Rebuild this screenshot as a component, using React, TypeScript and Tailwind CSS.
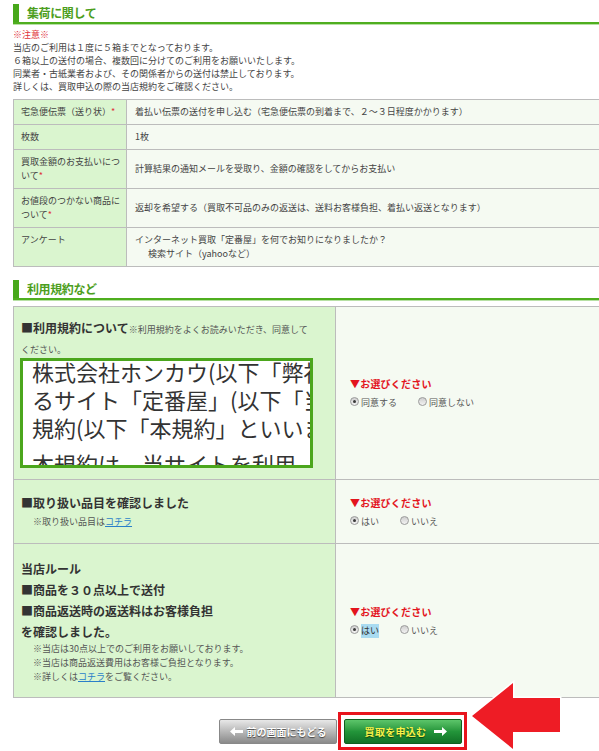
import React from "react";

function SectionHeader({ title }: { title: string }) {
  return (
    <div>
      <div className="flex h-[18px]">
        <div className="w-[6px] bg-[#47a81a]" />
        <div className="pl-[8px] text-[12px] leading-[18px] font-bold text-[#4c9e20] tracking-[-0.4px]">
          {title}
        </div>
      </div>
      <div className="h-[2px] bg-[#4fae1f]" />
      <div className="h-px bg-[#b7e0a4]" />
    </div>
  );
}

function Radio({ checked }: { checked?: boolean }) {
  return (
    <span className="relative inline-block w-[9px] h-[9px] rounded-full border border-[#9a9a9a] bg-gradient-to-b from-[#cfcfcf] to-[#f3f3f3] mt-[1px]">
      {checked && (
        <span className="absolute left-[2px] top-[2px] w-[3px] h-[3px] rounded-full bg-[#3a3a3a]" />
      )}
    </span>
  );
}

function Choice({
  a,
  b,
  highlight,
}: {
  a: string;
  b: string;
  highlight?: boolean;
}) {
  return (
    <div>
      <div className="text-[10px] leading-[16px] font-bold text-[#e3141d] tracking-[0.2px]">
        ▼お選びください
      </div>
      <div className="mt-[4px] flex items-start text-[9px] leading-[14px] text-[#555]">
        <Radio checked />
        <span className={"ml-[2px] " + (highlight ? "bg-[#a9dbf1] text-[#333]" : "")}>{a}</span>
        <span className="ml-[21px] flex items-start">
          <Radio />
          <span className="ml-[2px]">{b}</span>
        </span>
      </div>
    </div>
  );
}

const Req = () => <span className="text-[#e0323a]">*</span>;

export default function App() {
  const rows1: { label: React.ReactNode; value: React.ReactNode }[] = [
    {
      label: (
        <>
          宅急便伝票（送り状）<Req />
        </>
      ),
      value: "着払い伝票の送付を申し込む（宅急便伝票の到着まで、２～３日程度かかります）",
    },
    { label: "枚数", value: "1枚" },
    {
      label: (
        <>
          買取金額のお支払いにつ
          <br />
          いて<Req />
        </>
      ),
      value: "計算結果の通知メールを受取り、金額の確認をしてからお支払い",
    },
    {
      label: (
        <>
          お値段のつかない商品に
          <br />
          ついて<Req />
        </>
      ),
      value: "返却を希望する（買取不可品のみの返送は、送料お客様負担、着払い返送となります）",
    },
    {
      label: "アンケート",
      value: (
        <div>
          <div>インターネット買取「定番屋」を何でお知りになりましたか？</div>
          <div className="pl-[13px]">検索サイト（yahooなど）</div>
        </div>
      ),
    },
  ];

  return (
    <div className="relative w-[599px] h-[751px] overflow-hidden bg-white font-['Noto_Sans_CJK_JP','Noto_Sans',sans-serif] text-[#444]">
      <div className="ml-[13px] w-[655px] pt-[4px]">
        <SectionHeader title="集荷に関して" />

        <div className="mt-[3px] text-[9px] leading-[13px] text-[#444]">
          <div className="text-[#e0323a]">※注意※</div>
          <div>当店のご利用は１度に５箱までとなっております。</div>
          <div>６箱以上の送付の場合、複数回に分けてのご利用をお願いいたします。</div>
          <div>同業者・古紙業者および、その関係者からの送付は禁止しております。</div>
          <div>詳しくは、買取申込の際の当店規約をご確認ください。</div>
        </div>

        <div className="mt-[6px] border-t border-[#bcbcbc] text-[9px] leading-[14px] text-[#444]">
          {rows1.map((r, i) => (
            <div key={i} className="flex border-b border-[#bcbcbc]">
              <div className="w-[114px] shrink-0 bg-[#daf5cf] border-l border-r border-[#bcbcbc] pl-[7px] py-[5px]">
                {r.label}
              </div>
              <div className="flex-1 flex items-center bg-[#f5faf2] pl-[8px] py-[5px]">{r.value}</div>
            </div>
          ))}
        </div>

        <div className="mt-[13px]">
          <SectionHeader title="利用規約など" />
        </div>

        <div className="mt-[5px] border-t border-[#bcbcbc] text-[#333]">
          {/* Row 1 */}
          <div className="flex border-b border-[#bcbcbc] h-[173px]">
            <div className="w-[323px] shrink-0 bg-[#daf5cf] border-l border-r border-[#bcbcbc] pl-[7px] flex items-center">
              <div>
                <div className="leading-[16px]">
                  <span className="text-[12px] font-bold">■利用規約について</span>
                  <span className="text-[9px] text-[#555]">※利用規約をよくお読みいただき、同意して</span>
                  <br />
                  <span className="text-[9px] text-[#555]">ください。</span>
                </div>
                <div className="-ml-px w-[293px] h-[110px] border-[3px] border-[#4ba61c] bg-white overflow-hidden pl-[9px] text-[22px] leading-[28px] text-[#333] whitespace-nowrap">
                  <div className="-mt-[4px]">
                    <div>株式会社ホンカウ(以下「弊社</div>
                    <div>るサイト「定番屋」(以下「当</div>
                    <div>規約(以下「本規約」といいま</div>
                    <div className="pt-[8px]">本規約は、当サイトを利用</div>
                  </div>
                </div>
              </div>
            </div>
            <div className="flex-1 bg-[#f5faf2] pl-[14px] flex items-center">
              <Choice a="同意する" b="同意しない" />
            </div>
          </div>

          {/* Row 2 */}
          <div className="flex border-b border-[#bcbcbc] h-[64px]">
            <div className="w-[323px] shrink-0 bg-[#daf5cf] border-l border-r border-[#bcbcbc] pl-[7px] flex items-center">
              <div>
                <div className="text-[12px] leading-[16px] font-bold">■取り扱い品目を確認しました</div>
                <div className="mt-[4px] pl-[12px] text-[9px] leading-[14px] text-[#555]">
                  ※取り扱い品目は<span className="text-[#2a7fc9] underline">コチラ</span>
                </div>
              </div>
            </div>
            <div className="flex-1 bg-[#f5faf2] pl-[14px] flex items-center">
              <Choice a="はい" b="いいえ" />
            </div>
          </div>

          {/* Row 3 */}
          <div className="flex border-b border-[#bcbcbc] h-[154px]">
            <div className="w-[323px] shrink-0 bg-[#daf5cf] border-l border-r border-[#bcbcbc] pl-[7px] flex items-center">
              <div>
                <div className="text-[12px] leading-[21px] font-bold">
                  <div>当店ルール</div>
                  <div>■商品を３０点以上で送付</div>
                  <div>■商品返送時の返送料はお客様負担</div>
                  <div>を確認しました。</div>
                </div>
                <div className="pl-[12px] text-[9px] leading-[14px] text-[#555]">
                  <div>※当店は30点以上でのご利用をお願いしております。</div>
                  <div>※当店は商品返送費用はお客様ご負担となります。</div>
                  <div>
                    ※詳しくは<span className="text-[#2a7fc9] underline">コチラ</span>をご覧ください。
                  </div>
                </div>
              </div>
            </div>
            <div className="flex-1 bg-[#f5faf2] pl-[14px] flex items-center">
              <Choice a="はい" b="いいえ" highlight />
            </div>
          </div>
        </div>

        {/* Buttons */}
        <div className="mt-[21px] flex justify-center gap-[7px]">
          <button className="w-[118px] h-[25px] rounded-[2px] border border-[#888] bg-gradient-to-b from-[#e8e8e8] via-[#b8b8b8] to-[#8a8a8a] flex items-center justify-center gap-[4px] text-[10px] font-bold text-white [text-shadow:0_1px_1px_#444]">
            <svg width="13" height="9" viewBox="0 0 13 9">
              <polygon points="0,4.5 5,0 5,3 13,3 13,6 5,6 5,9" fill="white" />
            </svg>
            <span>前の画面にもどる</span>
          </button>
          <div className="relative">
            <div className="absolute -top-[7px] -bottom-[6px] -left-[6px] -right-[5px] border-[3px] border-[#e8141d]" />
            <button className="w-[118px] h-[25px] rounded-[2px] border border-[#0f5f20] bg-gradient-to-b from-[#5cc56a] via-[#23953a] to-[#117227] flex items-center justify-center gap-[8px] pl-[6px] text-[10px] font-bold text-[#f7f34a] tracking-[0.3px] [text-shadow:0_1px_1px_#0a3f12]">
              <span>買取を申込む</span>
              <svg width="13" height="9" viewBox="0 0 13 9">
                <polygon points="13,4.5 8,0 8,3 0,3 0,6 8,6 8,9" fill="white" />
              </svg>
            </button>
          </div>
        </div>
      </div>

      {/* Red annotation arrow */}
      <svg
        className="absolute left-[466px] top-[678px]"
        width="100"
        height="73"
        viewBox="0 0 100 73"
      >
        <polygon
          points="6,38 47,5 47,20 94,20 94,54 47,54 47,71"
          fill="#ee1c25"
          stroke="white"
          strokeWidth="3"
          strokeLinejoin="miter"
          paintOrder="stroke"
        />
      </svg>
    </div>
  );
}
